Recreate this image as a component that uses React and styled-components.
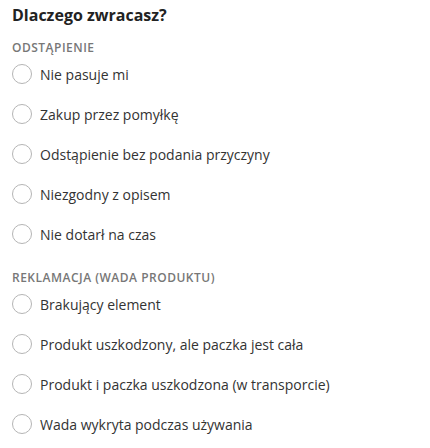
import React, { useState } from "react";
import styled, { createGlobalStyle } from "styled-components";

const GlobalStyle = createGlobalStyle`
  body {
    margin: 0;
    background: #fff;
    font-family: "Open Sans", "Liberation Sans", sans-serif;
  }
`;

const Wrapper = styled.div`
  padding: 4px 12px 0 12px;
`;

const Title = styled.h2`
  margin: 0 0 15px 0;
  font-size: 16px;
  line-height: 22px;
  font-weight: 700;
  color: #222;
`;

const Section = styled.div`
  margin-bottom: 17px;
`;

const SectionLabel = styled.div`
  font-size: 12px;
  line-height: 13px;
  font-weight: 600;
  letter-spacing: 0.5px;
  color: #777;
  text-transform: uppercase;
`;

const Row = styled.label`
  display: flex;
  align-items: center;
  gap: 8px;
  height: 40px;
  cursor: pointer;
`;

const Circle = styled.span`
  width: 20px;
  height: 20px;
  border-radius: 50%;
  border: 1px solid ${(p) => (p.$checked ? "#333" : "#b5b5b5")};
  box-sizing: border-box;
  flex-shrink: 0;
  display: flex;
  align-items: center;
  justify-content: center;
  &::after {
    content: "";
    width: 10px;
    height: 10px;
    border-radius: 50%;
    background: ${(p) => (p.$checked ? "#333" : "transparent")};
  }
`;

const RowText = styled.span`
  font-size: 14px;
  color: #333;
`;

const sections = [
  {
    label: "Odstąpienie",
    items: [
      "Nie pasuje mi",
      "Zakup przez pomyłkę",
      "Odstąpienie bez podania przyczyny",
      "Niezgodny z opisem",
      "Nie dotarł na czas",
    ],
  },
  {
    label: "Reklamacja (wada produktu)",
    items: [
      "Brakujący element",
      "Produkt uszkodzony, ale paczka jest cała",
      "Produkt i paczka uszkodzona (w transporcie)",
      "Wada wykryta podczas używania",
    ],
  },
];

const App = () => {
  const [selected, setSelected] = useState(null);
  return (
    <Wrapper>
      <GlobalStyle />
      <Title>Dlaczego zwracasz?</Title>
      {sections.map((s) => (
        <Section key={s.label}>
          <SectionLabel>{s.label}</SectionLabel>
          {s.items.map((item) => (
            <Row key={item} onClick={() => setSelected(item)}>
              <Circle $checked={selected === item} />
              <RowText>{item}</RowText>
            </Row>
          ))}
        </Section>
      ))}
    </Wrapper>
  );
};

export default App;
